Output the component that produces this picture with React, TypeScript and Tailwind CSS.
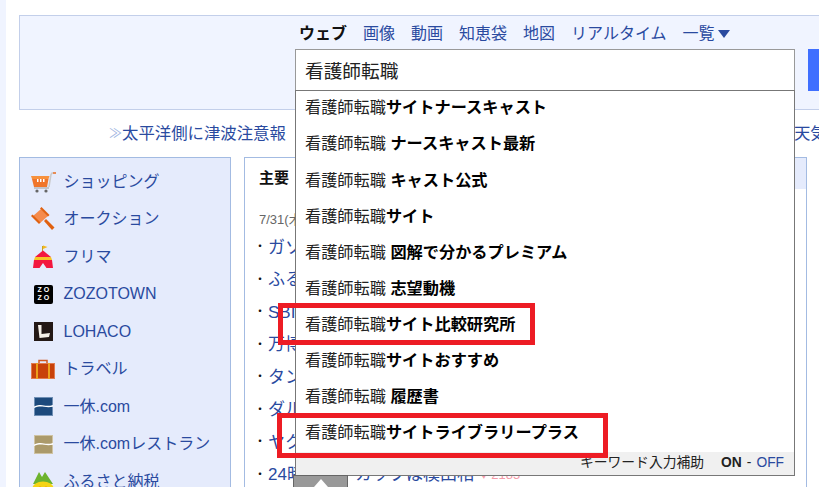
const jp = 'font-["Liberation_Sans","Noto_Sans_CJK_JP",sans-serif]';

const suggestions: { pre: string; bold: string }[] = [
  { pre: '看護師転職', bold: 'サイトナースキャスト' },
  { pre: '看護師転職', bold: ' ナースキャスト最新' },
  { pre: '看護師転職', bold: ' キャスト公式' },
  { pre: '看護師転職', bold: 'サイト' },
  { pre: '看護師転職', bold: ' 図解で分かるプレミアム' },
  { pre: '看護師転職', bold: ' 志望動機' },
  { pre: '看護師転職', bold: 'サイト比較研究所' },
  { pre: '看護師転職', bold: 'サイトおすすめ' },
  { pre: '看護師転職', bold: ' 履歴書' },
  { pre: '看護師転職', bold: 'サイトライブラリープラス' },
];

const navs = ['画像', '動画', '知恵袋', '地図', 'リアルタイム'];

function CartIcon() {
  return (
    <svg width="26" height="22" viewBox="0 0 26 22">
      <path d="M19 16L21 3.500 22 2h4" fill="none" stroke="#c9c9c9" strokeWidth="1.500" />
      <path d="M23 2h3" stroke="#f0752a" strokeWidth="1.500" />
      <path d="M1 5h18.500l-1 3H2z" fill="#f7913d" />
      <path d="M2 8h16.500l-1.500 8H4z" fill="#f0752a" />
      <rect x="7" y="8" width="1.500" height="3" fill="#fff" />
      <rect x="10" y="8" width="1.500" height="3" fill="#fff" />
      <rect x="13" y="8" width="1.500" height="3" fill="#fff" />
      <path d="M4 17h15" stroke="#aaa" strokeWidth="1.200" />
      <circle cx="7" cy="20" r="1.600" fill="#666" />
      <circle cx="16" cy="20" r="1.600" fill="#666" />
    </svg>
  );
}

function GavelIcon() {
  return (
    <svg width="24" height="24" viewBox="0 0 24 24">
      <path d="M10 2l7 7-8 7-7-7z" fill="#f58b4c" />
      <path d="M10.500 0l8 8-1.500 1.500-8-8zM1.500 7.500l8 8L8 17l-8-8z" fill="#e0600f" />
      <path d="M13 14l2-2 8.500 8.500-2.500 2.500z" fill="#e0600f" />
    </svg>
  );
}

function TentIcon() {
  return (
    <svg width="22" height="24" viewBox="0 0 22 24">
      <path d="M10.500 1v6" stroke="#c9a520" strokeWidth="1" />
      <path d="M11 0.500l4.500 1.500-4.500 2z" fill="#f4b81f" />
      <path d="M11 5.500l8 6.500H3z" fill="#f3173f" />
      <path d="M3 12h16l1 3H2z" fill="#f7c325" />
      <path d="M2 15h18l1 8h-6.500L11 18l-3.500 5H1z" fill="#f3173f" />
    </svg>
  );
}

function ZozoIcon() {
  return (
    <div className="flex h-[19px] w-[19px] flex-col items-center justify-center rounded-[2px] bg-black font-['Liberation_Sans',sans-serif] text-[7px] font-bold leading-[8px] tracking-[2px] text-white">
      <span className="pl-[2px]">ZO</span>
      <span className="pl-[2px]">ZO</span>
    </div>
  );
}

function LohacoIcon() {
  return (
    <div className="flex h-[19px] w-[19px] items-center justify-center bg-[#231815]">
      <svg width="15" height="15" viewBox="0 0 15 15">
        <path d="M2 1h3.500L5.500 10 14 9l-1 4-9.500 1z" fill="#f5f0e8" />
      </svg>
    </div>
  );
}

function BagIcon() {
  return (
    <svg width="24" height="20" viewBox="0 0 24 20">
      <path d="M8 4.500V1.500h8v3" fill="none" stroke="#d15a20" strokeWidth="1.500" />
      <rect x="0.500" y="4.500" width="23" height="15" fill="#c8410a" stroke="#e07b50" strokeWidth="1" />
      <rect x="5" y="4" width="2" height="16" fill="#eda01c" />
      <rect x="17" y="4" width="2" height="16" fill="#eda01c" />
    </svg>
  );
}

function IkyuIcon({ bg, line }: { bg: string; line: string }) {
  return (
    <svg width="19" height="19" viewBox="0 0 19 19">
      <rect x="0.500" y="0.500" width="18" height="18" fill={bg} stroke={line} strokeWidth="1" />
      <path d="M0 9.500c5-2 8-1.500 10-1s6 .5 9-.5v1.800c-3 .5-6 .5-9 0s-6-.5-10 1.200z" fill="#fff" />
    </svg>
  );
}

function FurusatoIcon() {
  return (
    <svg width="22" height="24" viewBox="0 0 22 24">
      <path d="M1 14L7 2l3 5 3-5 8 12z" fill="#6cb32e" />
      <ellipse cx="11" cy="18" rx="10.500" ry="6.500" fill="#f5d414" />
      <circle cx="8" cy="18" r="1.500" fill="#ee7a1a" />
      <circle cx="14" cy="18" r="1.500" fill="#ee7a1a" />
    </svg>
  );
}

const services: { label: string; icon: React.ReactNode }[] = [
  { label: 'ショッピング', icon: <CartIcon /> },
  { label: 'オークション', icon: <GavelIcon /> },
  { label: 'フリマ', icon: <TentIcon /> },
  { label: 'ZOZOTOWN', icon: <ZozoIcon /> },
  { label: 'LOHACO', icon: <LohacoIcon /> },
  { label: 'トラベル', icon: <BagIcon /> },
  { label: '一休.com', icon: <IkyuIcon bg="#1d4a7c" line="#6f8fb5" /> },
  { label: '一休.comレストラン', icon: <IkyuIcon bg="#ab9a6b" line="#cfc3a3" /> },
  { label: 'ふるさと納税', icon: <FurusatoIcon /> },
];

const topics = ['ガソリン', 'ふるさと', 'SBI証券', '万博会場', 'タンカー', 'ダルビッシュ', 'ヤクルト'];

export default function App() {
  return (
    <div className={`relative h-[487px] w-[819px] overflow-hidden bg-white ${jp}`}>
      <div className="flex h-full">
        <div className="w-[6px] shrink-0 bg-[#f0f4ff]" />
        <div className="flex-1 pl-[13px] pt-[15px]">
          {/* search header */}
          <div className="h-[95px] border border-r-0 border-[#c3cfea] bg-[#f0f4ff] pl-[279px] pt-[7px]">
            <div className="flex h-[22px] items-center gap-[16px] text-[16px] text-[#2a4a9f]">
              <span className="font-bold text-[#111]">ウェブ</span>
              {navs.map((n) => (
                <span key={n}>{n}</span>
              ))}
              <span className="flex items-center gap-[3px]">
                一覧
                <svg width="12" height="8" viewBox="0 0 12 8">
                  <path d="M0 0h12L6 8z" fill="#2a4a9f" />
                </svg>
              </span>
            </div>
          </div>

          {/* notice line */}
          <div className="flex h-[47px] items-center pb-[1px] pl-[90px] text-[16.400px] text-[#2a4a9f] whitespace-nowrap">
            <span className="w-[13px] text-[13px] text-[#9db2e0]">≫</span>太平洋側に津波注意報
            <span className="ml-[508px]">天気</span>
          </div>

          <div className="flex gap-[13px]">
            {/* left service menu */}
            <div className="h-[340px] w-[212px] shrink-0 border border-[#a3bbe2] bg-[#e5ebfc] pt-[5px]">
              {services.map((s) => (
                <div key={s.label} className="flex h-[37.500px] items-center text-[16px] text-[#2a4a9f] whitespace-nowrap">
                  <div className="flex w-[43.500px] shrink-0 justify-center pl-[3px]">{s.icon}</div>
                  <span>{s.label}</span>
                </div>
              ))}
            </div>

            {/* topics */}
            <div className="h-[340px] w-[563px] border border-[#a3bbe2]">
              <div className="flex h-[31px]">
                <div className="w-[540px] pl-[14px] pt-[10px] text-[15px] font-bold leading-[20px] text-[#111]">主要</div>
                <div className="flex-1 bg-[#e5ebfc]" />
              </div>
              <div className="pl-[14px]">
                <div className="mt-[22px] text-[13px] leading-[18px] text-[#666]">7/31(木)</div>
                <ul className="mt-[2px] text-[17px] text-[#2a4a9f]">
                  {topics.map((t) => (
                    <li key={t} className="flex h-[32.500px] items-center whitespace-nowrap">
                      <span className="-ml-[5px] w-[14px] text-[12px] text-[#111]">・</span>
                      <span>{t}</span>
                    </li>
                  ))}
                  <li className="flex h-[32.500px] items-center whitespace-nowrap">
                    <span className="-ml-[5px] w-[14px] text-[12px] text-[#111]">・</span>
                    <span>24時間ピーカップは模田相</span>
                    <span className="ml-[6px] text-[13px] text-[#f59aa8]">♥ 2185</span>
                  </li>
                </ul>
              </div>
            </div>
          </div>
        </div>
      </div>

      {/* search box */}
      <div className="absolute left-[295px] top-[49px] flex h-[42px] w-[500px] items-center border border-[#999] bg-white pl-[9px] pt-[4px] text-[18.700px] text-[#222]">
        看護師転職
      </div>
      <div className="absolute left-[808px] top-[49px] h-[42px] w-[11px] bg-[#3f6fff]" />

      {/* suggest dropdown */}
      <div className="absolute left-[295px] top-[90px] w-[500px] border border-[#777] bg-white">
        <ul>
          {suggestions.map((s, i) => (
            <li key={i} className="flex h-[36.100px] items-center whitespace-pre pb-[3px] pl-[9px] text-[16.200px] text-black">
              <span className="text-[#222]">{s.pre}</span>
              <span className="font-bold">{s.bold}</span>
            </li>
          ))}
        </ul>
        <div className="flex h-[23px] items-center justify-end bg-[#f0f0f0] pr-[10px] text-[13.800px] text-[#222]">
          <span>キーワード入力補助</span>
          <span className="ml-[17px] font-bold">ON</span>
          <span className="mx-[5px]">-</span>
          <span className="text-[#2a4a9f]">OFF</span>
        </div>
      </div>

      {/* collapse tab */}
      <div className="absolute left-[293px] top-[475px] flex h-[12px] w-[55px] justify-center border border-b-0 border-[#666] bg-[#999] pt-[3px]">
        <svg width="14" height="8" viewBox="0 0 14 8">
          <path d="M7 0l7 8H0z" fill="#fff" />
        </svg>
      </div>

      {/* red annotation boxes */}
      <div className="absolute left-[278px] top-[303px] h-[42px] w-[257px] border-[5px] border-[#ed1c24]" />
      <div className="absolute left-[277px] top-[413px] h-[45px] w-[331px] border-[5px] border-[#ed1c24]" />
    </div>
  );
}
